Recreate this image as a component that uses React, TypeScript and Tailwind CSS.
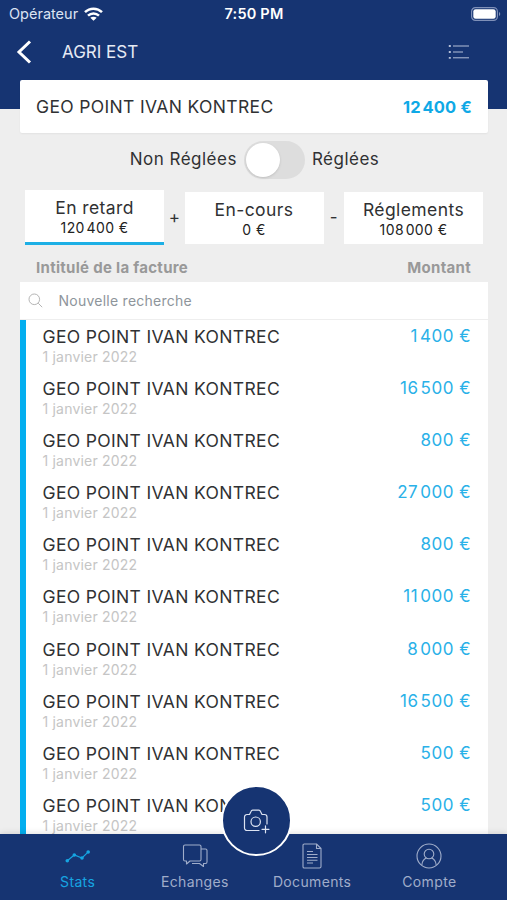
import { useState } from 'react';

const HAIR = '\u200a';

const invoices = ['1 400', '16 500', '800', '27 000', '800', '11 000', '8 000', '16 500', '500', '500'].map((amount, id) => ({
  id,
  title: 'GEO POINT IVAN KONTREC',
  date: '1 janvier 2022',
  amount: amount.replace(' ', HAIR),
}));

const totals = [
  { label: 'En retard', amount: `120${HAIR}400 €` },
  { label: 'En-cours', amount: '0 €' },
  { label: 'Réglements', amount: `108${HAIR}000 €` },
];

function WifiIcon() {
  return (
    <svg width="19" height="14" viewBox="0 0 19 14" fill="none" stroke="white" strokeWidth="2.5">
      <path d="M1 5.2C5.8.5 13.2.5 18 5.2" />
      <path d="M4 8.7c3.2-3 7.8-3 11 0" />
      <path d="M9.5 13.8 6.3 10.8c1.7-1.5 4.7-1.5 6.4 0z" fill="white" stroke="none" />
    </svg>
  );
}

function BatteryIcon() {
  return (
    <svg width="30" height="14" viewBox="0 0 30 14" fill="none">
      <rect x=".6" y=".6" width="25.8" height="12.8" rx="3.8" stroke="#7f90b8" strokeWidth="1.2" />
      <rect x="2.3" y="2.3" width="22.4" height="9.4" rx="2.3" fill="white" />
      <path d="M28 5c1.7.6 1.7 3.4 0 4z" fill="#7f90b8" />
    </svg>
  );
}

function MenuIcon() {
  return (
    <svg width="22" height="16" viewBox="0 0 22 16" stroke="#b4bfd8" strokeWidth="1">
      <path d="M5 2h16M5 8h10M5 13.8h16" />
      <path d="M.8 2h2M.8 8h2M.8 13.8h2" strokeWidth="1.8" />
    </svg>
  );
}

function StatsIcon() {
  return (
    <svg width="28" height="28" viewBox="0 0 28 28" fill="none" stroke="currentColor" strokeWidth="1.1">
      <path d="M3.3 18.7 10.3 13l7.7 3 6-5.9" />
      <g fill="currentColor" stroke="none">
        <circle cx="3.3" cy="18.7" r="1.8" />
        <circle cx="10.3" cy="13" r="1.8" />
        <circle cx="18" cy="16" r="1.8" />
        <circle cx="24.2" cy="10" r="1.8" />
      </g>
    </svg>
  );
}

function ChatIcon() {
  return (
    <svg width="28" height="28" viewBox="0 0 28 28" fill="none" stroke="currentColor" strokeWidth="1.1" strokeLinejoin="round">
      <path d="M4 3h14.500A1.500 1.500 0 0 1 20 4.500v13a1.500 1.500 0 0 1-1.500 1.500H9L5.500 22V19H4a1.500 1.500 0 0 1-1.500-1.500v-13A1.500 1.500 0 0 1 4 3z" />
      <path d="M20 7h4.500A1.500 1.500 0 0 1 26 8.500V20a1.500 1.500 0 0 1-1.500 1.500H22.500V24.500l-4-3H11" />
    </svg>
  );
}

function DocumentIcon() {
  return (
    <svg width="28" height="28" viewBox="0 0 28 28" fill="none" stroke="currentColor" strokeWidth="1.1" strokeLinejoin="round">
      <path d="M6.3 2H18.500l4.500 4.500v18a1.500 1.500 0 0 1-1.500 1.500H6.300A1.300 1.300 0 0 1 5 24.700V3.300A1.300 1.300 0 0 1 6.300 2zM18.500 2v4.500H23" />
      <path d="M9 9.500h6M9 12.500h10.500M9 15.500h10.500M9 18.300h10.500M9 21h6" />
    </svg>
  );
}

function AccountIcon() {
  return (
    <svg width="28" height="28" viewBox="0 0 28 28" fill="none" stroke="currentColor" strokeWidth="1.1">
      <circle cx="14" cy="14" r="12" />
      <circle cx="14" cy="12" r="4.8" />
      <path d="M6.8 23.300c.3-3.800 2-6.200 4.700-7.200M21.200 23.300c-.3-3.800-2-6.200-4.700-7.200" />
    </svg>
  );
}

function CameraIcon() {
  return (
    <svg width="28" height="28" viewBox="0 0 28 28" fill="none" stroke="#dce3f2" strokeWidth="1.2" strokeLinecap="round" strokeLinejoin="round">
      <path d="M16 23.500H4A2.500 2.500 0 0 1 1.500 21V10A2.500 2.500 0 0 1 4 7.500h2.500l1.500-3A2 2 0 0 1 9.700 3.200h6.100a2 2 0 0 1 1.700 1.300l1.500 3h2.500A2.500 2.500 0 0 1 24 10v7" />
      <circle cx="12.7" cy="14.7" r="4.7" />
      <path d="M22.500 18.800v7M19 22.300h7" />
    </svg>
  );
}

const tabs = [
  { label: 'Stats', Icon: StatsIcon },
  { label: 'Echanges', Icon: ChatIcon },
  { label: 'Documents', Icon: DocumentIcon },
  { label: 'Compte', Icon: AccountIcon },
];

export default function App() {
  const [settled, setSettled] = useState(false);
  const [selected, setSelected] = useState(0);
  const [tab, setTab] = useState('Stats');

  return (
    <div className="flex h-[900px] w-[507px] flex-col overflow-hidden bg-[#eeeeee] font-['Inter',sans-serif] text-[#303133]">
      <header className="h-[109px] shrink-0 bg-[#163472] text-white">
        <div className="grid h-[27px] grid-cols-3 items-center pl-[9px] pr-[6px] text-[14.5px]">
          <div className="flex items-center gap-1.5 text-[#dce3f2]">
            <span>Opérateur</span>
            <WifiIcon />
          </div>
          <span className="pr-[2px] text-center text-[14.5px] font-semibold tracking-[0.2px]">7:50 PM</span>
          <div className="flex justify-end"><BatteryIcon /></div>
        </div>
        <div className="flex h-[50px] items-center pl-4 pr-[37px]">
          <button aria-label="Retour">
            <svg width="16" height="24" viewBox="0 0 16 24" fill="none" stroke="white" strokeWidth="3">
              <path d="M14 1.500 3 12l11 10.500" />
            </svg>
          </button>
          <h1 className="ml-[30px] flex-1 pt-px text-[17px] text-[#e6eaf4]">AGRI EST</h1>
          <button aria-label="Menu"><MenuIcon /></button>
        </div>
      </header>

      <main className="-mt-[29px] flex min-h-0 flex-1 flex-col pl-5 pr-[19px]">
        <section className="flex h-[53px] shrink-0 items-center justify-between rounded-[2px] bg-white px-4 shadow-xs">
          <span className="pt-[2px] text-[17.5px] tracking-[0.35px]">GEO POINT IVAN KONTREC</span>
          <span className="pt-px text-[16.5px] font-bold tracking-[0.2px] text-[#0fa9e6]">12{HAIR}400 €</span>
        </section>

        <div className="mt-[7px] flex h-[39px] shrink-0 items-center justify-center gap-[7px] pl-px text-[17px] tracking-[0.5px]">
          <span className="pt-px">Non Réglées</span>
          <button
            onClick={() => setSettled(!settled)}
            className={`flex h-[38px] w-[61px] items-center rounded-full bg-[#dddddd] p-0.5 ${settled ? 'justify-end' : ''}`}
          >
            <span className="h-[34px] w-[34px] rounded-full bg-white shadow-sm" />
          </button>
          <span className="pt-px">Réglées</span>
        </div>

        <div className="mt-[11px] flex h-[55px] shrink-0 items-center pl-[5px] pr-[5px]">
          {totals.map((total, i) => (
            <div key={total.label} className="contents">
              {i > 0 && <span className="flex-1 text-center text-[17px]">{i === 1 ? '+' : '-'}</span>}
              <button
                onClick={() => setSelected(i)}
                className={`flex w-[139px] flex-col items-center bg-white pt-[7px] ${
                  selected === i ? 'h-[55px] border-b-[3px] border-[#1dafe5]' : 'h-[52px]'
                }`}
              >
                <span className="text-[17.5px] leading-[22px] tracking-[0.4px]">{total.label}</span>
                <span className="text-[14px] leading-[18px] tracking-[0.4px] text-[#222222]">{total.amount}</span>
              </button>
            </div>
          ))}
        </div>

        <div className="flex h-[37px] shrink-0 items-center justify-between pl-4 pr-[17px] pt-[9px] text-[15px] font-bold tracking-[0.3px] text-[#999999]">
          <span>Intitulé de la facture</span>
          <span>Montant</span>
        </div>

        <section className="min-h-0 flex-1 overflow-hidden bg-white">
          <div className="flex h-[38px] items-center border-b border-[#eeeeee] pl-[8px]">
            <svg width="15" height="15" viewBox="0 0 15 15" fill="none" stroke="#b5b5b5">
              <circle cx="6.3" cy="6.3" r="5.3" />
              <path d="m10.200 10.200 4 4" />
            </svg>
            <input
              type="text"
              placeholder="Nouvelle recherche"
              className="ml-[15.5px] flex-1 text-[14px] tracking-[0.25px] placeholder:text-[#8e959b] focus:outline-none"
            />
          </div>
          <div className="border-l-[6px] border-[#03aeef]">
            {invoices.map(invoice => (
              <div key={invoice.id} className="flex h-[52.1px] justify-between pl-[16.5px] pr-[17px] pt-[6px]">
                <div>
                  <p className="text-[17.5px] leading-[22px] tracking-[0.35px]">{invoice.title}</p>
                  <p className="text-[14px] leading-[17px] tracking-[0.2px] text-[#c5c5c5]">{invoice.date}</p>
                </div>
                <span className="text-[17px] leading-[21px] tracking-[0.5px] text-[#2ab1e8]">{invoice.amount} €</span>
              </div>
            ))}
          </div>
        </section>
      </main>

      <nav className="relative flex h-[66px] shrink-0 bg-[#163472] px-[19px] shadow-[0_-1px_6px_rgba(0,0,0,0.12)]">
        {tabs.map(({ label, Icon }) => (
          <button
            key={label}
            onClick={() => setTab(label)}
            className={`flex flex-1 flex-col items-center pt-2 ${tab === label ? 'text-[#16a5e2]' : 'text-[#a0adca]'}`}
          >
            <Icon />
            <span className="mt-[3px] text-[14px] leading-[18px] tracking-[0.35px]">{label}</span>
          </button>
        ))}
        <button
          aria-label="Photo"
          className="absolute -top-[49px] left-[221px] flex h-[71px] w-[71px] items-center justify-center rounded-full border-2 border-white bg-[#163472]"
        >
          <CameraIcon />
        </button>
      </nav>
    </div>
  );
}
